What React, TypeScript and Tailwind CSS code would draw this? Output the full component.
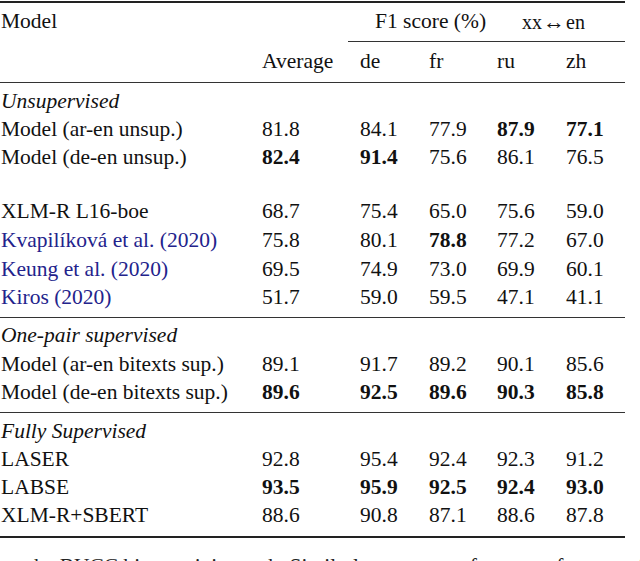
import React from "react";

type Cell = { v: string; b?: boolean };
type Row = { label: string; cite?: boolean; avg: Cell; vals: Cell[]; h: string };

const c = (v: string, b = false): Cell => ({ v, b });

const unsup1: Row[] = [
  { h: "h-[28px]", label: "Model (ar-en unsup.)", avg: c("81.8"), vals: [c("84.1"), c("77.9"), c("87.9", true), c("77.1", true)] },
  { h: "h-[28px]", label: "Model (de-en unsup.)", avg: c("82.4", true), vals: [c("91.4", true), c("75.6"), c("86.1"), c("76.5")] },
];
const unsup2: Row[] = [
  { h: "h-[28px]", label: "XLM-R L16-boe", avg: c("68.7"), vals: [c("75.4"), c("65.0"), c("75.6"), c("59.0")] },
  { h: "h-[30px]", label: "Kvapilíková et al. (2020)", cite: true, avg: c("75.8"), vals: [c("80.1"), c("78.8", true), c("77.2"), c("67.0")] },
  { h: "h-[28px]", label: "Keung et al. (2020)", cite: true, avg: c("69.5"), vals: [c("74.9"), c("73.0"), c("69.9"), c("60.1")] },
  { h: "h-[28px]", label: "Kiros (2020)", cite: true, avg: c("51.7"), vals: [c("59.0"), c("59.5"), c("47.1"), c("41.1")] },
];
const onePair: Row[] = [
  { h: "h-[29px]", label: "Model (ar-en bitexts sup.)", avg: c("89.1"), vals: [c("91.7"), c("89.2"), c("90.1"), c("85.6")] },
  { h: "h-[28px]", label: "Model (de-en bitexts sup.)", avg: c("89.6", true), vals: [c("92.5", true), c("89.6", true), c("90.3", true), c("85.8", true)] },
];
const fully: Row[] = [
  { h: "h-[28px]", label: "LASER", avg: c("92.8"), vals: [c("95.4"), c("92.4"), c("92.3"), c("91.2")] },
  { h: "h-[28px]", label: "LABSE", avg: c("93.5", true), vals: [c("95.9", true), c("92.5", true), c("92.4", true), c("93.0", true)] },
  { h: "h-[28px]", label: "XLM-R+SBERT", avg: c("88.6"), vals: [c("90.8"), c("87.1"), c("88.6"), c("87.8")] },
];

const grid = "grid grid-cols-[262px_98px_69px_68px_69px_59px] items-center";

function Num({ cell }: { cell: Cell }) {
  return <div className={cell.b ? "font-bold" : ""}>{cell.v}</div>;
}

function DataRow({ r }: { r: Row }) {
  return (
    <div className={`${grid} ${r.h}`}>
      <div className={`pl-[1px] ${r.cite ? "text-[#23238c]" : ""}`}>{r.label}</div>
      <Num cell={r.avg} />
      {r.vals.map((v, i) => (
        <Num key={i} cell={v} />
      ))}
    </div>
  );
}

function Section({ title }: { title: string }) {
  return <div className="h-[28px] flex items-center pl-[1px] italic">{title}</div>;
}

export default function App() {
  return (
    <div className="w-[640px] h-[561px] overflow-hidden bg-white text-[#111] text-[21.5px] leading-none font-['Liberation_Serif','DejaVu_Serif',serif]">
      <div className="w-[625px]">
        <div className="mt-[1px] h-[2px] bg-[#222]" />
        <div className={`${grid} h-[38px]`}>
          <div className="pl-[1px]">Model</div>
          <div />
          <div className="col-span-4 flex items-center pl-[15px]">
            <span className="w-[147px]">F1 score (%)</span>
            <span className="flex items-center text-[20px]">
              <span>xx</span>
              <span className="text-[22px] mx-[1px]">↔</span>
              <span>en</span>
            </span>
          </div>
        </div>
        <div className={grid}>
          <div className="col-span-2" />
          <div className="col-span-4 h-[1px] bg-[#333] -ml-[12px]" />
        </div>
        <div className={`${grid} h-[40px]`}>
          <div />
          <div>Average</div>
          <div>de</div>
          <div>fr</div>
          <div>ru</div>
          <div>zh</div>
        </div>
        <div className="h-[1px] bg-[#333]" />
        <div className="h-[5px]" />
        <Section title="Unsupervised" />
        {unsup1.map((r) => (
          <DataRow key={r.label} r={r} />
        ))}
        <div className="h-[26px]" />
        {unsup2.map((r) => (
          <DataRow key={r.label} r={r} />
        ))}
        <div className="h-[5px]" />
        <div className="h-[1px] bg-[#333]" />
        <div className="h-[4px]" />
        <Section title="One-pair supervised" />
        {onePair.map((r) => (
          <DataRow key={r.label} r={r} />
        ))}
        <div className="h-[5px]" />
        <div className="h-[1px] bg-[#333]" />
        <div className="h-[5px]" />
        <Section title="Fully Supervised" />
        {fully.map((r) => (
          <DataRow key={r.label} r={r} />
        ))}
        <div className="h-[6px]" />
        <div className="h-[2px] bg-[#222]" />
      </div>
      <div className="mt-[18px] pl-[28px] whitespace-nowrap text-[#222]">
        the BUCC bitext mining task. Similarly, we see performance from our fine-tuned
      </div>
    </div>
  );
}
